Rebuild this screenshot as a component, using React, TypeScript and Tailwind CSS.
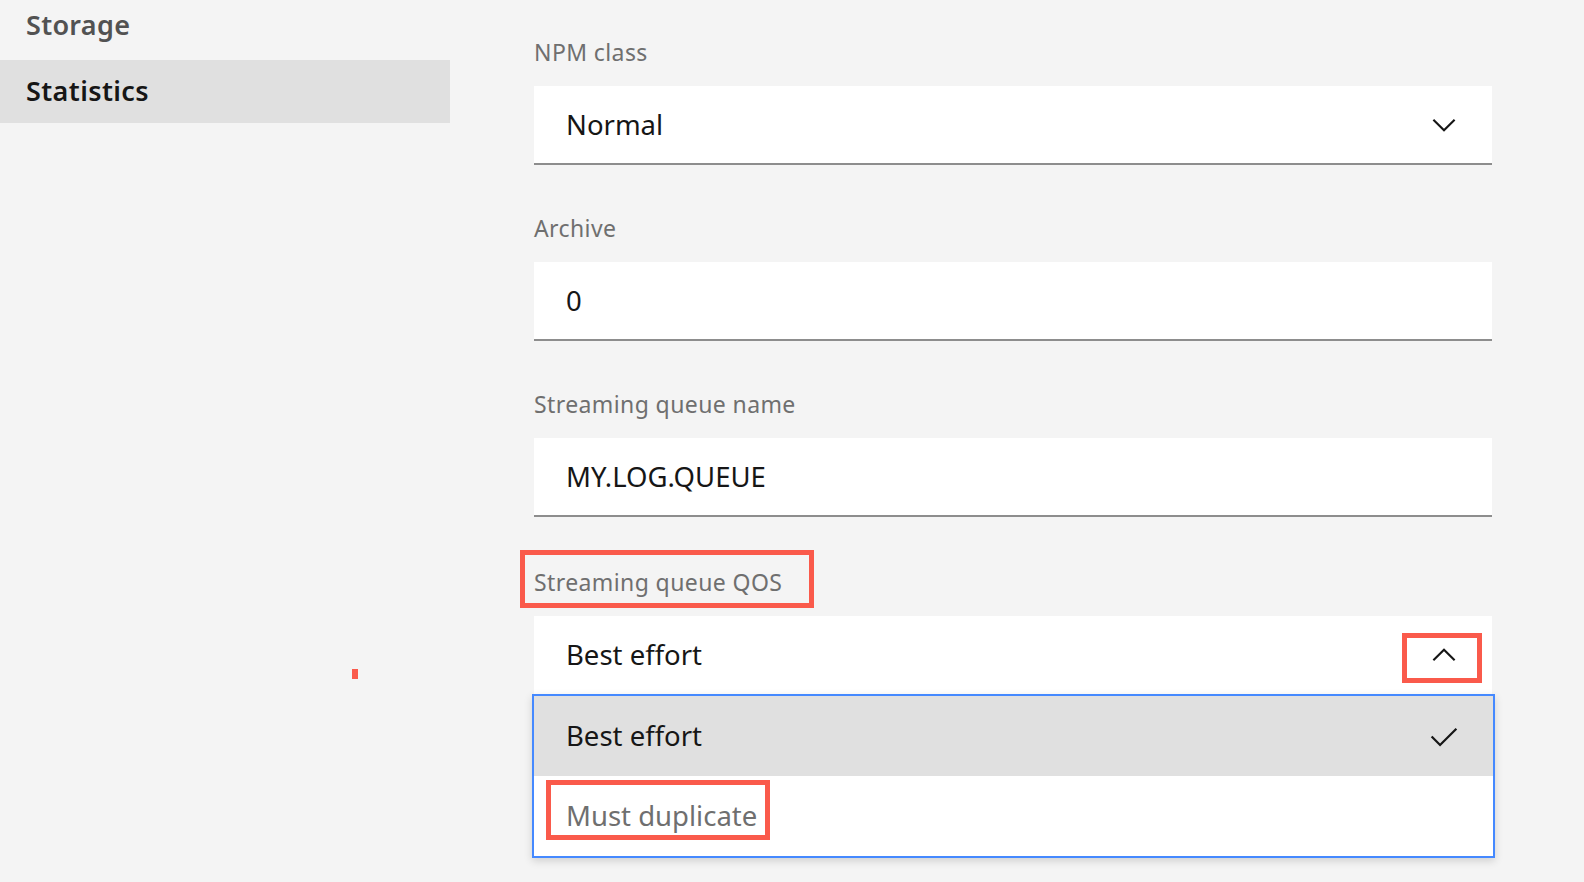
import React from "react";

const font = { fontFamily: '"Noto Sans", "Liberation Sans", sans-serif' };

function Chevron({ up }: { up?: boolean }) {
  return (
    <svg width="34" height="34" viewBox="0 0 32 32" fill="none" className="shrink-0">
      <path
        d={up ? "M6 21 L16 11 L26 21" : "M6 11 L16 21 L26 11"}
        stroke="#161616"
        strokeWidth="2"
      />
    </svg>
  );
}

function Check() {
  return (
    <svg width="36" height="36" viewBox="0 0 32 32" fill="none" className="shrink-0">
      <path d="M5 16.5 L12.5 24 L27 9.5" stroke="#161616" strokeWidth="2" />
    </svg>
  );
}

function Label({ children }: { children: React.ReactNode }) {
  return (
    <div className="mb-[22px] h-[24px] text-[23px] leading-[24px] tracking-[0.4px] text-[#6f6f6f]">
      {children}
    </div>
  );
}

function Field({ value, select }: { value: string; select?: boolean }) {
  return (
    <div className="flex h-[79px] items-center justify-between border-b-2 border-[#8d8d8d] bg-white pl-[32px] pr-[31px]">
      <span className="text-[27.5px] text-[#161616]">{value}</span>
      {select && <Chevron />}
    </div>
  );
}

export default function App() {
  return (
    <div className="relative flex h-[882px] w-[1584px] overflow-hidden bg-[#f4f4f4]" style={font}>
      {/* Navegación lateral */}
      <div className="w-[450px] shrink-0">
        <div className="flex h-[60px] items-center pb-[9px] pl-[26px] text-[27px] font-semibold tracking-[0.3px] text-[#525252]">
          Storage
        </div>
        <div className="flex h-[63px] items-center bg-[#e0e0e0] pl-[26px] text-[27px] font-semibold tracking-[0.4px] text-[#161616]">
          Statistics
        </div>
      </div>

      {/* Formulario */}
      <div className="box-content w-[958px] pl-[84px] pt-[40px]">
        <div>
          <Label>NPM class</Label>
          <Field value="Normal" select />
        </div>
        <div className="mt-[51px]">
          <Label>Archive</Label>
          <Field value="0" />
        </div>
        <div className="mt-[51px]">
          <Label>Streaming queue name</Label>
          <Field value="MY.LOG.QUEUE" />
        </div>
        <div className="mt-[53px]">
          <div className="relative">
            <Label>Streaming queue QOS</Label>
            <div className="pointer-events-none absolute left-[-14px] top-[-20px] h-[58px] w-[294px] border-[5px] border-[#fa5a4b]" />
          </div>
          <div className="relative">
            <div className="flex h-[78px] items-center justify-between bg-white pl-[32px] pr-[31px]">
              <span className="text-[27.5px] text-[#161616]">Best effort</span>
              <div className="relative">
                <Chevron up />
                <div className="pointer-events-none absolute left-[-25px] top-[-5px] h-[50px] w-[80px] border-[5px] border-[#fa5a4b]" />
              </div>
            </div>
            <div className="-ml-[2px] -mr-[3px] border-[2.5px] border-[#4589ff] bg-white shadow-[0_3px_8px_rgba(0,0,0,0.15)]">
              <div className="flex h-[80px] items-center justify-between bg-[#e0e0e0] pl-[32px] pr-[31px]">
                <span className="text-[27.5px] text-[#161616]">Best effort</span>
                <Check />
              </div>
              <div className="flex h-[80px] items-center pl-[32px]">
                <span className="relative text-[27.5px] text-[#6f6f6f]">
                  Must duplicate
                  <span className="pointer-events-none absolute left-[-20px] top-[-15px] h-[60px] w-[224px] border-[5px] border-[#fa5a4b]" />
                </span>
              </div>
            </div>
          </div>
        </div>
      </div>

      <div className="absolute left-[352px] top-[669px] h-[10px] w-[6px] bg-[#fa5a4b]" />
    </div>
  );
}
